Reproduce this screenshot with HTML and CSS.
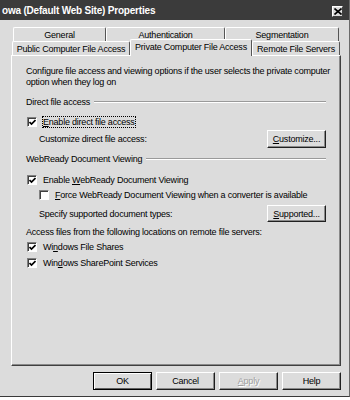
FILE: index.html
```html
<!DOCTYPE html>
<html>
<head>
<meta charset="utf-8">
<link rel="stylesheet" href="styles.css">
</head>
<body>
<div class="dialog">
  <div class="titlebar">
    <span class="title">owa (Default Web Site) Properties</span>
    <span class="close"><svg width="8" height="7" viewBox="0 0 8 7"><path d="M0.5 0.5 L7.5 6.5 M7.5 0.5 L0.5 6.5" stroke="#000" stroke-width="1.6" fill="none"/></svg></span>
  </div>
  <div class="tabs">
    <div class="tabrow back">
      <div class="tab t-general">General</div>
      <div class="tab t-auth">Authentication</div>
      <div class="tab t-seg">Segmentation</div>
    </div>
    <div class="tabrow front">
      <div class="tab t-public">Public Computer File Access</div>
      <div class="tab t-private active">Private Computer File Access</div>
      <div class="tab t-remote">Remote File Servers</div>
    </div>
  </div>
  <div class="panel">
    <p class="desc">Configure file access and viewing options if the user selects the private computer<br>option when they log on</p>

    <div class="group g1"><span>Direct file access</span><span class="rule"></span></div>
    <div class="check c1"><span class="box on"><svg width="7" height="7" viewBox="0 0 7 7"><path d="M0.5 3 L2.5 5 L6.5 1" stroke="#000" stroke-width="1.7" fill="none"/></svg></span><span class="label focus"><u>E</u>nable direct file access</span></div>
    <div class="action a1"><span>Customize direct file access:</span><span class="btn"><u>C</u>ustomize...</span></div>

    <div class="group g2"><span>WebReady Document Viewing</span><span class="rule"></span></div>
    <div class="check c2"><span class="box on"><svg width="7" height="7" viewBox="0 0 7 7"><path d="M0.5 3 L2.5 5 L6.5 1" stroke="#000" stroke-width="1.7" fill="none"/></svg></span><span class="label">Enable <u>W</u>ebReady Document Viewing</span></div>
    <div class="check c3 indent"><span class="box"></span><span class="label"><u>F</u>orce WebReady Document Viewing when a converter is available</span></div>
    <div class="action a2"><span>Specify supported document types:</span><span class="btn"><u>S</u>upported...</span></div>

    <div class="plain p1">Access files from the following locations on remote file servers:</div>
    <div class="check c4"><span class="box on"><svg width="7" height="7" viewBox="0 0 7 7"><path d="M0.5 3 L2.5 5 L6.5 1" stroke="#000" stroke-width="1.7" fill="none"/></svg></span><span class="label">Wi<u>n</u>dows File Shares</span></div>
    <div class="check c5"><span class="box on"><svg width="7" height="7" viewBox="0 0 7 7"><path d="M0.5 3 L2.5 5 L6.5 1" stroke="#000" stroke-width="1.7" fill="none"/></svg></span><span class="label">Win<u>d</u>ows SharePoint Services</span></div>
  </div>
  <div class="buttons">
    <span class="btn dbtn default">OK</span>
    <span class="btn dbtn">Cancel</span>
    <span class="btn dbtn disabled"><u>A</u>pply</span>
    <span class="btn dbtn">Help</span>
  </div>
</div>
</body>
</html>
```

FILE: styles.css
```css
* { box-sizing: border-box; }
html, body { margin: 0; padding: 0; background: #ffffff; }
body {
  font-family: "Liberation Sans", Arial, sans-serif;
  font-size: 9px;
  letter-spacing: -0.22px;
  color: #000;
}
.dialog {
  width: 350px;
  height: 397px;
  background: #dcdcdc;
  border-bottom: 1px solid #3a3a3a;
  border-right: 1px solid #6a6a6a;
  display: flex;
  flex-direction: column;
}
.titlebar {
  height: 20px;
  background: #3b3b3b;
  display: flex;
  align-items: center;
  justify-content: space-between;
  padding: 0 6px 0 2px;
}
.title {
  color: #fff;
  font-weight: bold;
  font-size: 10px;
  letter-spacing: -0.2px;
  padding-top: 1px;
}
.close {
  width: 11px;
  height: 11px;
  margin-top: 3px;
  background: #dcdcdc;
  border: 1px solid;
  border-color: #fff #404040 #404040 #fff;
  display: flex;
  align-items: center;
  justify-content: center;
}
.tabs {
  padding-top: 7px;
  padding-left: 12px;
}
.tabrow {
  display: flex;
  height: 14px;
  align-items: flex-end;
}
.tabrow.back { padding-left: 1px; }
.tab {
  height: 14px;
  border: 1px solid;
  border-color: #fff #555 transparent #fff;
  border-bottom: 0;
  border-radius: 2px 2px 0 0;
  display: flex;
  align-items: center;
  justify-content: center;
  background: #dcdcdc;
  white-space: nowrap;
}
.t-general { width: 93px; }
.t-auth { width: 119px; }
.t-seg { width: 114px; }
.t-public { width: 118px; }
.t-private { width: 122px; }
.t-remote { width: 88px; }
.tab.active {
  height: 17px;
  margin-bottom: -1px;
  position: relative;
  z-index: 1;
  padding-bottom: 2px;
}
.panel {
  margin-left: 11px;
  width: 330px;
  height: 311px;
  border: 1px solid;
  border-color: #fff #404040 #404040 #fff;
  box-shadow: inset -1px -1px 0 #8a8a8a;
  padding: 0 13px 0 14px;
  display: flex;
  flex-direction: column;
}
.desc {
  margin: 10px 0 0 0;
  line-height: 11px;
  white-space: nowrap;
}
.group {
  display: flex;
  align-items: center;
  height: 14px;
}
.group .rule {
  flex: 1;
  margin-left: 4px;
  margin-right: 1px;
  height: 2px;
  border-top: 1px solid #9a9a9a;
  border-bottom: 1px solid #fff;
}
.g1 { margin-top: 7px; }
.g2 { margin-top: 4px; }
.check {
  display: flex;
  align-items: center;
  height: 14px;
  padding-left: 1px;
}
.check.indent { padding-left: 13px; }
.box {
  width: 10px;
  height: 10px;
  background: #fff;
  border: 1px solid;
  border-color: #808080 #fff #fff #808080;
  box-shadow: inset 1px 1px 0 #404040;
  display: flex;
  align-items: center;
  justify-content: center;
  margin-right: 5px;
  padding: 1px 0 0 1px;
}
.label { padding: 0 1px; line-height: 12px; }
.label.focus { outline: 1px dotted #000; outline-offset: -1px; }
.c1 { margin-top: 6px; }
.c2 { margin-top: 7px; }
.c3 { margin-top: 1px; }
.c4 { margin-top: 1px; }
.c5 { margin-top: 2px; }
.action {
  display: flex;
  align-items: center;
  justify-content: space-between;
  padding-left: 13px;
  padding-right: 1px;
}
.a1 { margin-top: 1px; height: 18px; }
.a2 { margin-top: 3px; height: 17px; }
.plain {
  height: 14px;
  display: flex;
  align-items: center;
  margin-top: 3px;
}
.btn {
  width: 59px;
  height: 18px;
  display: flex;
  align-items: center;
  justify-content: center;
  background: #dcdcdc;
  border: 1px solid;
  border-color: #fff #202020 #202020 #fff;
  box-shadow: inset -1px -1px 0 #8a8a8a;
}
.a2 .btn { height: 17px; }
.buttons {
  display: flex;
  justify-content: flex-end;
  gap: 4px;
  margin-top: 6px;
  padding-right: 8px;
}
.dbtn { height: 18px; }
.default {
  border: 1px solid #000;
  box-shadow: inset 1px 1px 0 #fff, inset -1px -1px 0 #606060;
}
.disabled {
  color: #a0a0a0;
  text-shadow: 1px 1px 0 #fff;
}
u { text-decoration: underline; text-underline-offset: 1px; }
```
